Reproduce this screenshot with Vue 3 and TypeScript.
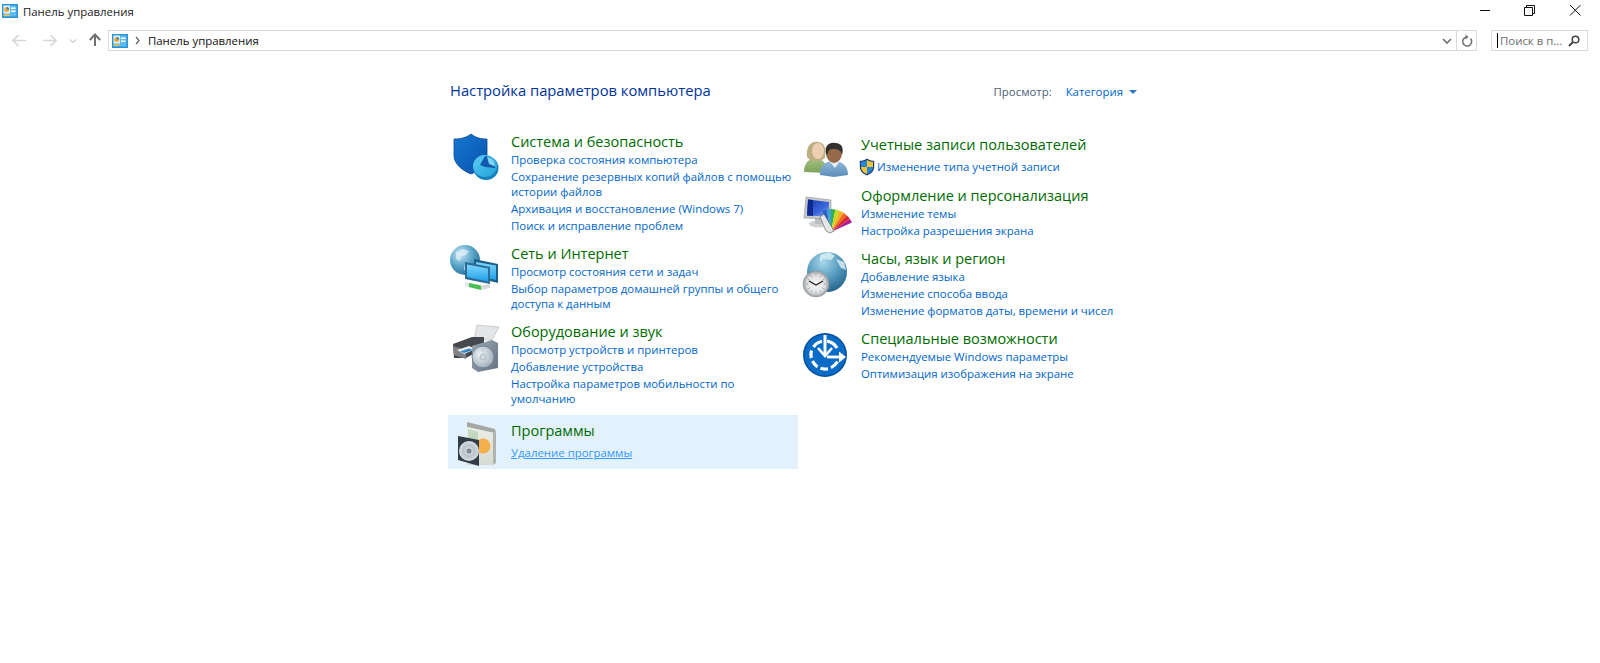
<script setup lang="ts">
interface Item {
  icon: string
  title: string
  links: string[]
  tall?: boolean
  selected?: boolean
  shieldLink?: boolean
}

const leftItems: Item[] = [
  {
    icon: 'shield',
    title: 'Система и безопасность',
    links: [
      'Проверка состояния компьютера',
      'Сохранение резервных копий файлов с помощью\nистории файлов',
      'Архивация и восстановление (Windows 7)',
      'Поиск и исправление проблем',
    ],
  },
  {
    icon: 'network',
    title: 'Сеть и Интернет',
    links: ['Просмотр состояния сети и задач', 'Выбор параметров домашней группы и общего\nдоступа к данным'],
  },
  {
    icon: 'hardware',
    title: 'Оборудование и звук',
    links: [
      'Просмотр устройств и принтеров',
      'Добавление устройства',
      'Настройка параметров мобильности по\nумолчанию',
    ],
  },
  { icon: 'programs', title: 'Программы', links: ['Удаление программы'], tall: true, selected: true },
]

const rightItems: Item[] = [
  {
    icon: 'users',
    title: 'Учетные записи пользователей',
    links: ['Изменение типа учетной записи'],
    tall: true,
    shieldLink: true,
  },
  { icon: 'display', title: 'Оформление и персонализация', links: ['Изменение темы', 'Настройка разрешения экрана'] },
  {
    icon: 'clock',
    title: 'Часы, язык и регион',
    links: ['Добавление языка', 'Изменение способа ввода', 'Изменение форматов даты, времени и чисел'],
  },
  {
    icon: 'access',
    title: 'Специальные возможности',
    links: ['Рекомендуемые Windows параметры', 'Оптимизация изображения на экране'],
  },
]

const columns = [
  { key: 'left', cls: 'col-left', items: leftItems },
  { key: 'right', cls: 'col-right', items: rightItems },
]

const fan = ['#2f5fc8', '#3fa0e0', '#35b04a', '#c8d820', '#f2b01e', '#ee6a1f', '#d9252a', '#b0208a']
function wedge(i: number): string {
  const a0 = (-(112 - i * 11) * Math.PI) / 180
  const a1 = a0 + (11 * Math.PI) / 180
  const r = 23
  const cx = 29
  const cy = 46
  return `M${cx} ${cy}L${(cx + r * Math.cos(a0)).toFixed(1)} ${(cy + r * Math.sin(a0)).toFixed(1)}L${(cx + r * Math.cos(a1)).toFixed(1)} ${(cy + r * Math.sin(a1)).toFixed(1)}Z`
}

const ticks = Array.from({ length: 12 }, (_, i) => {
  const a = (i * 30 * Math.PI) / 180
  return {
    x1: (14 + 9.5 * Math.cos(a)).toFixed(1),
    y1: (35 + 9.5 * Math.sin(a)).toFixed(1),
    x2: (14 + 8 * Math.cos(a)).toFixed(1),
    y2: (35 + 8 * Math.sin(a)).toFixed(1),
  }
})
</script>

<template>
  <div class="window">
    <header class="titlebar">
      <svg class="cp-icon" viewBox="0 0 16 14">
        <rect x="0" y="0" width="16" height="14" fill="#2a93d8" />
        <rect x="1.500" y="1.500" width="13" height="11" fill="#5cbcf0" />
        <rect x="1.500" y="1.500" width="6.500" height="8" fill="#dff2fb" />
        <circle cx="4.700" cy="5.500" r="2.500" fill="#f4a62a" />
        <path d="M4.700 5.500V3A2.500 2.500 0 0 1 7.200 5.500Z" fill="#2f7fc0" />
        <rect x="9" y="3.500" width="4.500" height="1.500" fill="#fff" />
        <rect x="9" y="6.500" width="4.500" height="1.500" fill="#fff" />
        <rect x="1.500" y="10.500" width="6" height="1.500" fill="#f6c04a" />
      </svg>
      <span class="window-title">Панель управления</span>
      <div class="window-buttons">
        <svg class="wb" viewBox="0 0 46 30"><path d="M18 10.500h10" stroke="#111" fill="none" /></svg>
        <svg class="wb" viewBox="0 0 46 30">
          <path d="M16.500 7.500h8v8h-8zM18.500 7.500v-2h8v8h-2" stroke="#111" fill="none" />
        </svg>
        <svg class="wb" viewBox="0 0 46 30"><path d="M16 5l10.500 10.500M26.500 5L16 15.500" stroke="#111" fill="none" /></svg>
      </div>
    </header>

    <nav class="navbar">
      <svg class="nav-btn" viewBox="0 0 30 21">
        <path d="M14 10.500H27M19.500 5L14 10.500L19.500 16" stroke="#d6d6d6" stroke-width="1.600" fill="none" />
      </svg>
      <svg class="nav-btn" viewBox="0 0 30 21">
        <path d="M14 10.500H27M21.500 5L27 10.500L21.500 16" stroke="#d6d6d6" stroke-width="1.600" fill="none" />
      </svg>
      <svg class="nav-drop" viewBox="0 0 9 21"><path d="M2 9.500l3 3 3-3" stroke="#d0d0d0" stroke-width="1.200" fill="none" /></svg>
      <svg class="nav-up" viewBox="0 0 14 21">
        <path d="M7 16V5M1.800 10L7 4.500L12.200 10" stroke="#707070" stroke-width="2" fill="none" />
      </svg>
      <div class="address">
        <svg class="cp-icon addr-icon" viewBox="0 0 16 14">
          <rect x="0" y="0" width="16" height="14" fill="#2a93d8" />
          <rect x="1.500" y="1.500" width="13" height="11" fill="#5cbcf0" />
          <rect x="1.500" y="1.500" width="6.500" height="8" fill="#dff2fb" />
          <circle cx="4.700" cy="5.500" r="2.500" fill="#f4a62a" />
          <path d="M4.700 5.500V3A2.500 2.500 0 0 1 7.200 5.500Z" fill="#2f7fc0" />
          <rect x="9" y="3.500" width="4.500" height="1.500" fill="#fff" />
          <rect x="9" y="6.500" width="4.500" height="1.500" fill="#fff" />
          <rect x="1.500" y="10.500" width="6" height="1.500" fill="#f6c04a" />
        </svg>
        <svg class="crumb-sep" viewBox="0 0 5 9"><path d="M1 1l3 3.500L1 8" stroke="#666" stroke-width="1.300" fill="none" /></svg>
        <span class="crumb">Панель управления</span>
        <svg class="addr-chev" viewBox="0 0 10 6"><path d="M1 1l4 4 4-4" stroke="#6d6d6d" stroke-width="1.600" fill="none" /></svg>
        <div class="refresh">
          <svg viewBox="0 0 12 14" width="12" height="14">
            <path d="M9.500 4.500A4.500 4.500 0 1 1 5 3.200" stroke="#707070" stroke-width="1.500" fill="none" />
            <path d="M4.500 0.500v5l3-2.500z" fill="#707070" />
          </svg>
        </div>
      </div>
      <div class="search">
        <span class="caret"></span>
        <span class="search-text">Поиск в п...</span>
        <svg class="search-icon" viewBox="0 0 12 12">
          <circle cx="7.500" cy="4.500" r="3.300" stroke="#444" stroke-width="1.500" fill="none" />
          <path d="M5 7L1 11" stroke="#444" stroke-width="2" />
        </svg>
      </div>
    </nav>

    <main class="content">
      <div class="content-head">
        <h1 class="page-title">Настройка параметров компьютера</h1>
        <div class="view-by">
          <span class="view-label">Просмотр:</span>
          <span class="view-value">Категория</span>
          <span class="view-arrow"></span>
        </div>
      </div>

      <div class="columns">
        <section v-for="col in columns" :key="col.key" :class="['column', col.cls]">
          <article
            v-for="item in col.items"
            :key="item.title"
            :class="['item', { tall: item.tall, selected: item.selected }]"
          >
            <svg class="item-icon" viewBox="0 0 48 48">
              <template v-if="item.icon === 'shield'">
                <defs>
                  <linearGradient id="gShield" x1="0" y1="0" x2="1" y2="1">
                    <stop offset="0" stop-color="#1477d4" />
                    <stop offset="1" stop-color="#0a52a8" />
                  </linearGradient>
                  <linearGradient id="gDisc" x1="0" y1="0" x2="1" y2="1">
                    <stop offset="0" stop-color="#5cd0f2" />
                    <stop offset="1" stop-color="#1f9ed8" />
                  </linearGradient>
                </defs>
                <path d="M19 2C14 6 8 7 2 7V24C2 32 11 39 19 42C25 40 32 35 35 28V7C29 7 24 6 19 2Z" fill="url(#gShield)" stroke="#0a4a94" stroke-width="0.800" />
                <ellipse cx="34" cy="36" rx="12.500" ry="12" fill="#1380bf" />
                <ellipse cx="33" cy="34" rx="12" ry="11" fill="url(#gDisc)" />
                <path d="M33 34L33 23C27 23 22 28 22 34Z" fill="#4cc4ee" />
                <path d="M33 24L28 33L33 35L43 36C44 30 39 24 33 24Z" fill="#1258ac" />
                <path d="M35 24.500L37 32L43 34.500C43 29 40 26 35 24.500Z" fill="#7ad6f2" />
              </template>

              <template v-else-if="item.icon === 'network'">
                <defs>
                  <radialGradient id="gGlobe" cx="0.35" cy="0.3" r="0.8">
                    <stop offset="0" stop-color="#c9e6f2" />
                    <stop offset="0.5" stop-color="#5ba6c9" />
                    <stop offset="1" stop-color="#1d6a94" />
                  </radialGradient>
                  <linearGradient id="gScreen" x1="0" y1="0" x2="0" y2="1">
                    <stop offset="0" stop-color="#7fd6fa" />
                    <stop offset="1" stop-color="#1fa0ea" />
                  </linearGradient>
                </defs>
                <circle cx="13" cy="16" r="15" fill="url(#gGlobe)" />
                <path d="M4 8l7-3 6 2-3 4-5 1-1 5-4-2zM13 19l4 1 0 6-3 3-2-4z" fill="#e4f3f8" opacity="0.7" />
                <path d="M22 15L46 20V39L22 33Z" fill="#1e5f8a" />
                <path d="M24 18L44 21.500V36L24 31Z" fill="url(#gScreen)" />
                <path d="M13 18L38 23V40L13 35Z" fill="#2c6c96" />
                <path d="M15 20.500L36 24.500V37.500L15 33Z" fill="url(#gScreen)" />
                <path d="M13 38L28 41V46L13 42Z" fill="#e2e6e8" />
                <path d="M17 39L29 41.500V46L17 43Z" fill="#45c252" />
                <path d="M29 41.500L38 40V44L29 46Z" fill="#d6dadc" />
              </template>

              <template v-else-if="item.icon === 'hardware'">
                <defs>
                  <linearGradient id="gBox" x1="0" y1="0" x2="1" y2="1">
                    <stop offset="0" stop-color="#9aa8b6" />
                    <stop offset="1" stop-color="#667280" />
                  </linearGradient>
                  <radialGradient id="gCone" cx="0.4" cy="0.4" r="0.7">
                    <stop offset="0" stop-color="#f3f6f8" />
                    <stop offset="1" stop-color="#93a4b3" />
                  </radialGradient>
                </defs>
                <path d="M25 3L47 5L40 18L22 18Z" fill="#e3e5e6" stroke="#b4b7b9" stroke-width="0.600" />
                <path d="M1 22L20 15H32V26L14 36H2Z" fill="#45484d" />
                <path d="M1 24L14 28V37L2 33Z" fill="#7d8186" />
                <path d="M5 28L17 24L24 27L12 32Z" fill="#e8eaec" />
                <path d="M8 29.500L17 26.500L21 28L12 31Z" fill="#3886c8" />
                <path d="M20 24L40 18L46 21V46L26 50L20 46Z" fill="url(#gBox)" />
                <circle cx="31" cy="35" r="11" fill="url(#gCone)" stroke="#697785" stroke-width="0.800" />
                <path d="M31 35L31 25M31 35L40 40M31 35L22 40" stroke="#bfcad3" stroke-width="0.700" />
                <circle cx="31" cy="35" r="3" fill="#cfd8df" stroke="#8a98a5" stroke-width="0.500" />
              </template>

              <template v-else-if="item.icon === 'programs'">
                <defs>
                  <linearGradient id="gPkg" x1="0" y1="0" x2="0" y2="1">
                    <stop offset="0" stop-color="#eceee8" />
                    <stop offset="1" stop-color="#d6dad1" />
                  </linearGradient>
                  <radialGradient id="gCd" cx="0.5" cy="0.5" r="0.55">
                    <stop offset="0" stop-color="#eef1f3" />
                    <stop offset="0.5" stop-color="#b9c3ca" />
                    <stop offset="1" stop-color="#e3e7ea" />
                  </radialGradient>
                </defs>
                <path d="M15 1L43 8V12L15 6Z" fill="#a5a7a3" />
                <path d="M15 6L41 12V44H15Z" fill="url(#gPkg)" />
                <path d="M41 12L44 9V42L41 44Z" fill="#b0b3ae" />
                <circle cx="31" cy="25" r="7.500" fill="#f4b04a" />
                <path d="M16 8L26 10.500V20L16 18Z" fill="#a9cba8" opacity="0.6" />
                <path d="M6 15L27 19V45L6 39Z" fill="#303c47" />
                <circle cx="17" cy="30" r="10" fill="url(#gCd)" />
                <circle cx="17" cy="30" r="2.500" fill="#7c8992" />
              </template>

              <template v-else-if="item.icon === 'users'">
                <defs>
                  <linearGradient id="gW" x1="0" y1="0" x2="0" y2="1">
                    <stop offset="0" stop-color="#a6c283" />
                    <stop offset="1" stop-color="#7da25b" />
                  </linearGradient>
                  <linearGradient id="gM" x1="0" y1="0" x2="0" y2="1">
                    <stop offset="0" stop-color="#8fb9d9" />
                    <stop offset="1" stop-color="#5b8db8" />
                  </linearGradient>
                </defs>
                <path d="M2 37C2 28 7 24 12 23C18 23 25 26 26 38Z" fill="url(#gW)" />
                <path d="M5 22C4 10 10 6 16 7C23 8 24 13 23 23L18 26H9Z" fill="#bcae80" />
                <ellipse cx="16" cy="16" rx="6" ry="8" fill="#eccfb3" />
                <path d="M18 40C18 30 24 26 32 26C40 26 46 31 46 40L32 42Z" fill="url(#gM)" />
                <path d="M27 26L33 33L38 26Z" fill="#e7eef3" />
                <ellipse cx="32" cy="18" rx="8" ry="10" fill="#95694a" />
                <path d="M24 19C22 10 28 7 33 8C40 8 42 13 40 20C39 15 36 14 31 14C28 14 26 15 25.500 20Z" fill="#33302e" />
              </template>

              <template v-else-if="item.icon === 'display'">
                <defs>
                  <linearGradient id="gMon" x1="0" y1="0" x2="1" y2="1">
                    <stop offset="0" stop-color="#1a38a8" />
                    <stop offset="0.6" stop-color="#3a66dc" />
                    <stop offset="1" stop-color="#8fb0ec" />
                  </linearGradient>
                </defs>
                <ellipse cx="17" cy="38" rx="10" ry="3.500" fill="#cfd2d4" />
                <rect x="13" y="31" width="7" height="7" fill="#bcbfc1" />
                <path d="M4 11L29 14V33L2 32Z" fill="#c6c9cc" stroke="#8f9396" stroke-width="0.600" />
                <path d="M6 13.500L27 16V30.500L5 29.500Z" fill="url(#gMon)" />
                <path d="M6 13.500L11 14V30L5 29.500Z" fill="#0e2a8e" />
                <path v-for="(c, i) in fan" :key="c" :d="wedge(i)" :fill="c" />
                <path d="M24 45L18 31L22 28L32 45L28 47Z" fill="#e4e6e8" stroke="#555" stroke-width="0.600" />
              </template>

              <template v-else-if="item.icon === 'clock'">
                <defs>
                  <radialGradient id="gGlobe2" cx="0.4" cy="0.25" r="0.85">
                    <stop offset="0" stop-color="#a6d8ea" />
                    <stop offset="0.55" stop-color="#4f93b8" />
                    <stop offset="1" stop-color="#1c5a82" />
                  </radialGradient>
                  <radialGradient id="gDial" cx="0.5" cy="0.5" r="0.55">
                    <stop offset="0" stop-color="#fafafa" />
                    <stop offset="1" stop-color="#d4d6d8" />
                  </radialGradient>
                </defs>
                <circle cx="25" cy="23" r="20" fill="url(#gGlobe2)" />
                <path d="M18 6l9-3 6 4-4 4-8-1-3 3zM34 10l8 3 2 8-5-2z" fill="#d8eef6" opacity="0.85" />
                <circle cx="14" cy="35" r="13" fill="#b0b3b6" stroke="#8a8d90" stroke-width="0.600" />
                <circle cx="14" cy="35" r="10.500" fill="url(#gDial)" />
                <line v-for="(t, i) in ticks" :key="i" :x1="t.x1" :y1="t.y1" :x2="t.x2" :y2="t.y2" stroke="#777" stroke-width="0.700" />
                <path d="M7 32L14 36L21 32" stroke="#1c1c1c" stroke-width="1.200" fill="none" />
              </template>

              <template v-else-if="item.icon === 'access'">
                <circle cx="23" cy="26" r="22" fill="#084f9c" />
                <circle cx="23" cy="26" r="20.500" fill="#0b6cc8" />
                <path d="M25 12.200A14 14 0 0 1 35 19M11.500 18A14 14 0 0 1 20 12.300M9.300 29A14 14 0 0 1 9.500 21.500M15.500 37.800A14 14 0 0 1 10.500 32M26 39.700A14 14 0 0 1 18.500 39.300M35.500 32.500A14 14 0 0 1 29 38.600" stroke="#fff" stroke-width="3.200" fill="none" />
                <path d="M23 6V25" stroke="#fff" stroke-width="3" />
                <path d="M16 19L23 27L30 19" stroke="#fff" stroke-width="2.600" fill="none" />
                <path d="M25 28H39" stroke="#fff" stroke-width="2.800" />
                <path d="M37 22.500L44 28L37 33.500Z" fill="#fff" />
              </template>
            </svg>
            <div class="item-body">
              <h2 class="item-title">{{ item.title }}</h2>
              <a v-for="link in item.links" :key="link" :class="['item-link', { 'with-shield': item.shieldLink }]">
                <svg v-if="item.shieldLink" class="uac" viewBox="0 0 16 18">
                  <path d="M8 0.500C6 2 3.500 2.800 0.800 2.800V9C0.800 13 4 16 8 17.500C12 16 15.200 13 15.200 9V2.800C12.500 2.800 10 2 8 0.500Z" fill="#1a3f78" />
                  <path d="M8 2V9H2V3.800C4.200 3.800 6.300 3.200 8 2Z" fill="#2a86d8" />
                  <path d="M8 2V9H14V3.800C11.800 3.800 9.700 3.200 8 2Z" fill="#f5c52e" />
                  <path d="M2 9H8V16C4.800 14.800 2 12.400 2 9Z" fill="#f5c52e" />
                  <path d="M14 9H8V16C11.200 14.800 14 12.400 14 9Z" fill="#2a86d8" />
                </svg>
                <span>{{ link }}</span>
              </a>
            </div>
          </article>
        </section>
      </div>
    </main>
  </div>
</template>

<style>
html,
body {
  margin: 0;
  background: #fff;
}
</style>

<style scoped>
.window {
  width: 1600px;
  height: 663px;
  overflow: hidden;
  background: #fff;
  font-family: 'Open Sans', 'Noto Sans', sans-serif;
  font-size: 11.4px;
  color: #1a1a1a;
}
.titlebar {
  display: flex;
  align-items: center;
  height: 30px;
  padding-left: 2px;
  box-sizing: border-box;
}
.cp-icon {
  width: 16px;
  height: 14px;
  flex: none;
  margin-top: -8px;
}
.window-title {
  margin-left: 5px;
  margin-top: -7px;
  color: #222;
}
.window-buttons {
  display: flex;
  margin-left: auto;
  align-self: flex-start;
}
.wb {
  width: 46px;
  height: 30px;
  display: block;
}
.navbar {
  display: flex;
  align-items: center;
  height: 21px;
  padding-left: 0;
}
.nav-btn {
  width: 30px;
  height: 21px;
  flex: none;
  margin-left: -1px;
}
.nav-btn + .nav-btn {
  margin-left: 0;
}
.nav-drop {
  width: 9px;
  height: 21px;
  margin-left: 9px;
  flex: none;
}
.nav-up {
  width: 14px;
  height: 21px;
  margin-left: 11px;
  flex: none;
}
.address {
  display: flex;
  align-items: center;
  width: 1369px;
  height: 21px;
  margin-left: 6px;
  border: 1px solid #d9d9d9;
  box-sizing: border-box;
  flex: none;
}
.addr-icon {
  margin: 0 0 0 3px;
}
.crumb-sep {
  width: 5px;
  height: 9px;
  margin-left: 7px;
  flex: none;
}
.crumb {
  margin-left: 8px;
  color: #111;
}
.addr-chev {
  width: 10px;
  height: 6px;
  margin-left: auto;
  margin-right: 4px;
  flex: none;
}
.refresh {
  display: flex;
  align-items: center;
  justify-content: center;
  width: 19px;
  height: 19px;
  border-left: 1px solid #d9d9d9;
  flex: none;
}
.search {
  display: flex;
  align-items: center;
  width: 97px;
  height: 21px;
  margin-left: 14px;
  border: 1px solid #d9d9d9;
  box-sizing: border-box;
  flex: none;
}
.caret {
  width: 1px;
  height: 15px;
  margin-left: 5px;
  background: #000;
  flex: none;
}
.search-text {
  margin-left: 2px;
  color: #6d6d6d;
  white-space: nowrap;
}
.search-icon {
  width: 12px;
  height: 12px;
  margin-left: auto;
  margin-right: 7px;
  flex: none;
}
.content {
  width: 704px;
  margin: 0 auto;
}
.content-head {
  display: flex;
  justify-content: space-between;
  align-items: center;
  height: 20px;
  margin: 29px 0 26px;
  padding: 0 16px 0 2px;
}
.page-title {
  margin: 0;
  font-size: 14.75px;
  font-weight: 400;
  line-height: 20px;
  color: #003399;
}
.view-by {
  display: flex;
  align-items: center;
  margin-top: 3px;
  margin-right: -1px;
}
.view-label {
  color: #4c607a;
}
.view-value {
  margin-left: 14px;
  color: #0066cc;
}
.view-arrow {
  width: 0;
  height: 0;
  margin-left: 6px;
  border-left: 4px solid transparent;
  border-right: 4px solid transparent;
  border-top: 4px solid #2a75cf;
}
.columns {
  display: flex;
}
.column {
  display: flex;
  flex-direction: column;
  align-items: stretch;
}
.col-left {
  width: 350px;
}
.col-right {
  width: 354px;
  padding-top: 3px;
}
.item {
  display: flex;
  gap: 11px;
  padding: 6px 0 3px 4px;
}
.item.tall {
  padding-bottom: 5px;
}
.item.selected {
  margin-top: 4px;
  padding-bottom: 8px;
  background: #e3f1fc;
}
.item-icon {
  width: 48px;
  height: 48px;
  margin-bottom: -48px;
  flex: none;
  overflow: visible;
}
.item-body {
  display: flex;
  flex-direction: column;
  align-items: flex-start;
  min-width: 0;
}
.item-title {
  margin: 0;
  padding-bottom: 1px;
  font-size: 14.5px;
  font-weight: 400;
  line-height: 19px;
  color: #006b00;
}
.item-link {
  display: block;
  margin: 0 0 2px;
  line-height: 15px;
  color: #0066cc;
  white-space: pre;
  cursor: pointer;
}
.item.tall .item-link {
  margin: 4px 0 1px;
}
.item.selected .item-link {
  color: #3399ff;
  text-decoration: underline;
}
.item-link.with-shield {
  display: flex;
  align-items: center;
}
.uac {
  width: 16px;
  height: 18px;
  margin: -2px 2px -2px -2px;
  flex: none;
}
</style>
